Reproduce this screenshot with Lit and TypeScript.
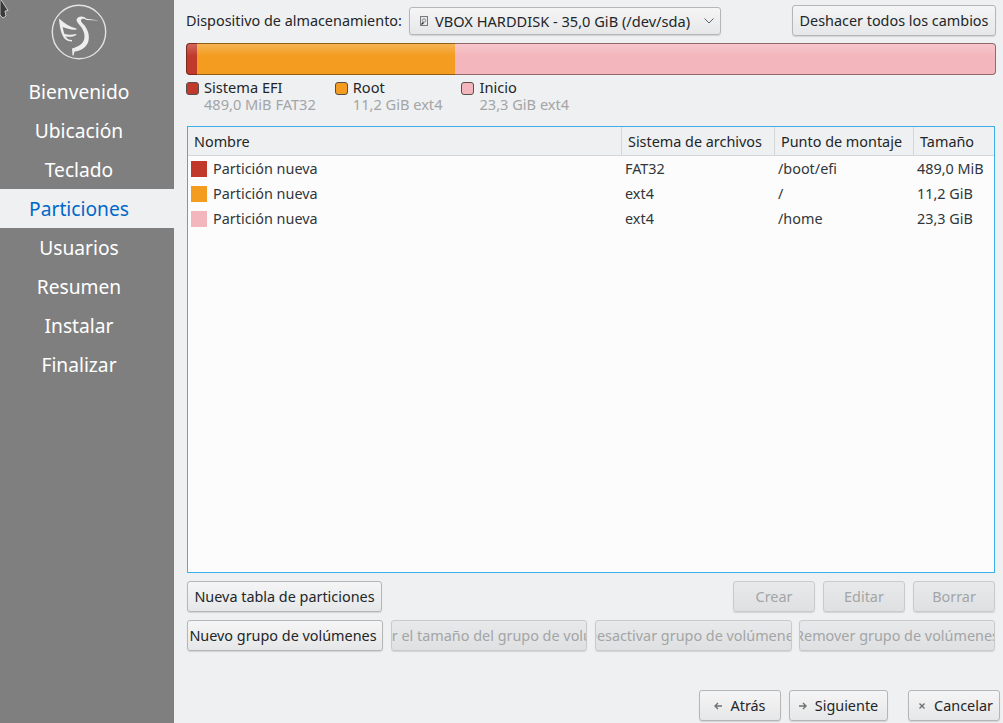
import { LitElement, css, html } from "lit";
import { customElement } from "lit/decorators.js";

const steps = ["Bienvenido", "Ubicación", "Teclado", "Particiones", "Usuarios", "Resumen", "Instalar", "Finalizar"];

const legend = [
  { name: "Sistema EFI", info: "489,0 MiB FAT32", cls: "efi" },
  { name: "Root", info: "11,2 GiB ext4", cls: "root" },
  { name: "Inicio", info: "23,3 GiB ext4", cls: "home" },
];

const rows = [
  { cls: "efi", fs: "FAT32", mount: "/boot/efi", size: "489,0 MiB" },
  { cls: "root", fs: "ext4", mount: "/", size: "11,2 GiB" },
  { cls: "home", fs: "ext4", mount: "/home", size: "23,3 GiB" },
];

@customElement("app-root")
export class AppRoot extends LitElement {
  static styles = css`
    :host {
      display: block;
      width: 1003px;
      height: 723px;
      overflow: hidden;
      position: relative;
      background: #eff0f1;
      color: #232629;
      font-family: "Noto Sans", sans-serif;
      font-size: 14.4px;
    }
    * {
      box-sizing: border-box;
    }
    .page {
      display: flex;
      height: 723px;
    }
    .cursor {
      position: absolute;
      left: 0;
      top: 0;
    }
    .side {
      width: 174px;
      flex: none;
      background: #7f7f7f;
      display: flex;
      flex-direction: column;
      padding-top: 4px;
    }
    .logo {
      margin-left: 51px;
      width: 56px;
      height: 56px;
      margin-bottom: 12px;
    }
    .step {
      height: 39px;
      line-height: 40px;
      padding-right: 16px;
      text-align: center;
      color: #fff;
      font-size: 19.2px;
    }
    .step.on {
      background: #eff0f1;
      color: #0068c8;
    }
    .main {
      flex: 1;
      min-width: 0;
      padding: 5px 7px 2px 12px;
      display: flex;
      flex-direction: column;
    }
    .top {
      display: flex;
      align-items: center;
      height: 31px;
    }
    .label {
      width: 223px;
    }
    button {
      font: inherit;
      color: inherit;
      border: 1px solid #b4b6b8;
      border-radius: 3px;
      background: linear-gradient(#f5f5f6, #e6e7e8);
      box-shadow: 0 1px 1px rgba(0, 0, 0, 0.12);
      padding: 0;
      overflow: hidden;
      white-space: nowrap;
      display: flex;
      align-items: center;
      justify-content: center;
      height: 31px;
    }
    button[disabled] {
      color: #a3a5a7;
      background: linear-gradient(#e8e9ea, #dfe0e1);
      border-color: #c9cacc;
    }
    .combo {
      width: 312px;
      height: 28px;
      justify-content: flex-start;
      padding-left: 10px;
      gap: 7px;
      font-size: 14.6px;
    }
    .combo .arrow {
      margin-left: auto;
      margin-right: 6px;
      display: flex;
    }
    .undo {
      margin-left: auto;
      width: 204px;
    }
    .bar {
      margin-top: 7px;
      height: 32px;
      display: flex;
    }
    .bar div {
      position: relative;
      border-style: solid;
      border-width: 1px 0;
      overflow: hidden;
    }
    .bar .efi {
      width: 11px;
      border-color: #7c2a20;
      border-left-width: 1px;
      border-radius: 4px 0 0 4px;
    }
    .bar .root {
      width: 258px;
      border-color: #8f5f16;
    }
    .bar .home {
      flex: 1;
      border-color: #93686d;
      border-right-width: 1px;
      border-radius: 0 4px 4px 0;
    }
    .efi {
      background: #c0392b;
    }
    .root {
      background: #f39c1f;
    }
    .home {
      background: #f4b6bd;
    }
    .bar div::after {
      content: "";
      position: absolute;
      left: 0;
      right: 0;
      top: 0;
      height: 12px;
      background: linear-gradient(rgba(255, 255, 255, 0.24), rgba(255, 255, 255, 0));
    }
    .legend {
      display: flex;
      margin-top: 4px;
      height: 34px;
      line-height: 17px;
      font-size: 14.6px;
    }
    .leg {
      display: flex;
      gap: 5px;
      margin-right: 19px;
    }
    .leg .dot {
      width: 13px;
      height: 13px;
      margin-top: 3px;
      border: 1px solid #55504c;
      border-radius: 3px;
    }
    .leg small {
      display: block;
      font-size: inherit;
      color: #a3a5a7;
    }
    .table {
      margin: 13px 1px 0;
      height: 447px;
      background: #fcfcfc;
      border: 1px solid #3daee9;
    }
    .head,
    .row {
      display: grid;
      grid-template-columns: 433px 153px 139px 1fr;
    }
    .head {
      height: 29px;
      background: #eff0f1;
      border-bottom: 1px solid #d5d6d8;
      line-height: 29px;
    }
    .head div {
      padding-left: 6px;
      border-left: 1px solid #d5d6d8;
    }
    .head div:first-child {
      border-left: 0;
    }
    .row {
      height: 25px;
      line-height: 25px;
      color: #31363b;
    }
    .row > div {
      padding-left: 4px;
    }
    .row > .name {
      padding-left: 3px;
      display: flex;
      align-items: center;
      gap: 6px;
    }
    .swatch {
      width: 16px;
      height: 16px;
    }
    .actions {
      display: flex;
      justify-content: space-between;
      margin: 8px 1px 0;
    }
    .groups {
      justify-content: flex-start;
      gap: 8px;
    }
    .small-group {
      display: flex;
      gap: 8px;
    }
    .small {
      width: 82px;
    }
    .new-table {
      width: 195px;
    }
    .new-group,
    .clip {
      width: 196px;
    }
    .new-group {
      padding-right: 4px;
    }
    .clip-wide {
      width: 197px;
    }
    .clip-wide + .clip {
      margin-left: -1px;
    }
    .nav {
      margin: auto -4px 0 0;
      display: flex;
      justify-content: flex-end;
      gap: 8px;
    }
    .nav button {
      gap: 8px;
    }
    .back {
      width: 82px;
    }
    .next {
      width: 99px;
      margin-right: 12px;
    }
    .cancel {
      width: 92px;
      padding-left: 3px;
    }
  `;

  private navIcon(d: string) {
    return html`<svg width="8" height="8" viewBox="0 0 8 8" fill="none" stroke="#6e7174" stroke-width="1.400">
      <path d=${d}></path>
    </svg>`;
  }

  render() {
    return html`
      <div class="page">
        <nav class="side">
          <svg class="logo" viewBox="0 0 56 56" fill="none">
            <circle cx="28" cy="28" r="26.700" stroke="#e4e4e4" stroke-width="1.400"></circle>
            <path
              fill="#eee"
              d="M48.700 16.500 35.500 14.800C32 11.500 27 12 25.500 15.500 25.500 18 28 20 30.500 23.500 33.500 28 34.500 33 32.500 37 30.500 41 26 43 21 44.500L21.500 51.500H22.500L23.500 47.500C29 47 34.500 44 37 38.500 39 33 37.500 27 34 22 32 19.500 29.500 17.500 30 16 31 14 33.500 14.500 35.500 16Z"
            ></path>
            <path
              fill="#eee"
              d="M8 14.500C8.500 22 10 30 13.500 34.500 15 36.500 18 37.500 21 37.500V36C18 36 16 35 14.500 32.500 18 33 22 33 25.500 31L25 30C21 31 17 31 13.500 30 12.500 27.500 12 25 11.800 23 16 24.500 21 26.500 25.500 25.500V24.500C19 23 13 19 8 14.500Z"
            ></path>
          </svg>
          ${steps.map((s) => html`<div class="step ${s === "Particiones" ? "on" : ""}">${s}</div>`)}
        </nav>
        <main class="main">
          <div class="top">
            <div class="label">Dispositivo de almacenamiento:</div>
            <button class="combo">
              <svg width="8" height="10" viewBox="0 0 8 10" fill="none">
                <rect x="0.500" y="0.500" width="7" height="9" fill="#e8e8e8" stroke="#77797b"></rect>
                <circle cx="4" cy="4.500" r="1.700" stroke="#8a8c8e"></circle>
                <path d="M1.500 8.500 3.500 6.500" stroke="#222" stroke-width="1.200"></path>
              </svg>
              <span>VBOX HARDDISK - 35,0 GiB (/dev/sda)</span>
              <span class="arrow">
                <svg width="10" height="6" viewBox="0 0 10 6" fill="none" stroke="#5f6265">
                  <path d="M0.500 0.500 5 5 9.500 0.500"></path>
                </svg>
              </span>
            </button>
            <button class="undo">Deshacer todos los cambios</button>
          </div>
          <div class="bar">
            <div class="efi"></div>
            <div class="root"></div>
            <div class="home"></div>
          </div>
          <div class="legend">
            ${legend.map(
              (l) => html`<div class="leg">
                <div class="dot ${l.cls}"></div>
                <div><span>${l.name}</span><small>${l.info}</small></div>
              </div>`
            )}
          </div>
          <div class="table">
            <div class="head">
              <div>Nombre</div>
              <div>Sistema de archivos</div>
              <div>Punto de montaje</div>
              <div>Tamaño</div>
            </div>
            ${rows.map(
              (r) => html`<div class="row">
                <div class="name"><div class="swatch ${r.cls}"></div>Partición nueva</div>
                <div>${r.fs}</div>
                <div>${r.mount}</div>
                <div>${r.size}</div>
              </div>`
            )}
          </div>
          <div class="actions">
            <button class="new-table">Nueva tabla de particiones</button>
            <div class="small-group">
              <button class="small" disabled>Crear</button>
              <button class="small" disabled>Editar</button>
              <button class="small" disabled>Borrar</button>
            </div>
          </div>
          <div class="actions groups">
            <button class="new-group">Nuevo grupo de volúmenes</button>
            <button class="clip" disabled>Cambiar el tamaño del grupo de volúmenes</button>
            <button class="clip-wide" disabled>Desactivar grupo de volúmenes</button>
            <button class="clip" disabled>Remover grupo de volúmenes</button>
          </div>
          <div class="nav">
            <button class="back">${this.navIcon("M8 4H1M4 1 1 4l3 3")}Atrás</button>
            <button class="next">${this.navIcon("M0 4h7M4 1l3 3-3 3")}Siguiente</button>
            <button class="cancel">${this.navIcon("M1.500 1.500l5 5M6.500 1.500l-5 5")}Cancelar</button>
          </div>
        </main>
      </div>
      <svg class="cursor" width="10" height="19" viewBox="0 0 10 19">
        <path d="M0-2 8 10.500 5 11 6 16 3 18 0 15Z" fill="#3a3a3a" stroke="#e0e0e0" stroke-width="0.800"></path>
      </svg>
    `;
  }
}
